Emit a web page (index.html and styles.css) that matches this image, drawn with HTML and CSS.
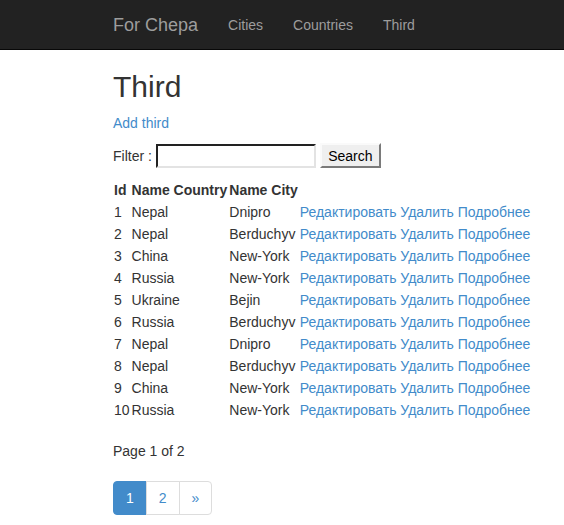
FILE: index.html
```html
<!DOCTYPE html>
<html>
<head>
<meta charset="utf-8">
<title>Third</title>
<link rel="stylesheet" href="styles.css">
</head>
<body>
<nav class="navbar">
  <div class="nav-inner">
    <a class="brand" href="#">For Chepa</a>
    <ul class="nav-links">
      <li><a href="#">Cities</a></li>
      <li><a href="#">Countries</a></li>
      <li><a href="#">Third</a></li>
    </ul>
  </div>
</nav>
<div class="container">
  <h2 class="title">Third</h2>
  <p class="add"><a href="#">Add third</a></p>
  <form class="filter">
    <span class="filter-label">Filter :</span>
    <input class="filter-input" type="text">
    <button class="filter-btn" type="button">Search</button>
  </form>
  <table class="grid">
    <thead>
      <tr><th>Id</th><th>Name Country</th><th>Name City</th><th></th></tr>
    </thead>
    <tbody>
      <tr><td>1</td><td>Nepal</td><td>Dnipro</td><td><a href="#">Редактировать</a> <a href="#">Удалить</a> <a href="#">Подробнее</a></td></tr>
      <tr><td>2</td><td>Nepal</td><td>Berduchyv</td><td><a href="#">Редактировать</a> <a href="#">Удалить</a> <a href="#">Подробнее</a></td></tr>
      <tr><td>3</td><td>China</td><td>New-York</td><td><a href="#">Редактировать</a> <a href="#">Удалить</a> <a href="#">Подробнее</a></td></tr>
      <tr><td>4</td><td>Russia</td><td>New-York</td><td><a href="#">Редактировать</a> <a href="#">Удалить</a> <a href="#">Подробнее</a></td></tr>
      <tr><td>5</td><td>Ukraine</td><td>Bejin</td><td><a href="#">Редактировать</a> <a href="#">Удалить</a> <a href="#">Подробнее</a></td></tr>
      <tr><td>6</td><td>Russia</td><td>Berduchyv</td><td><a href="#">Редактировать</a> <a href="#">Удалить</a> <a href="#">Подробнее</a></td></tr>
      <tr><td>7</td><td>Nepal</td><td>Dnipro</td><td><a href="#">Редактировать</a> <a href="#">Удалить</a> <a href="#">Подробнее</a></td></tr>
      <tr><td>8</td><td>Nepal</td><td>Berduchyv</td><td><a href="#">Редактировать</a> <a href="#">Удалить</a> <a href="#">Подробнее</a></td></tr>
      <tr><td>9</td><td>China</td><td>New-York</td><td><a href="#">Редактировать</a> <a href="#">Удалить</a> <a href="#">Подробнее</a></td></tr>
      <tr><td>10</td><td>Russia</td><td>New-York</td><td><a href="#">Редактировать</a> <a href="#">Удалить</a> <a href="#">Подробнее</a></td></tr>
    </tbody>
  </table>
  <p class="pageinfo">Page 1 of 2</p>
  <ul class="pagination">
    <li class="active"><span>1</span></li>
    <li><a href="#">2</a></li>
    <li><a href="#">»</a></li>
  </ul>
</div>
</body>
</html>
```

FILE: styles.css
```css
* { box-sizing: border-box; }
html, body { margin: 0; padding: 0; }
body {
  font-family: "Liberation Sans", Arial, sans-serif;
  font-size: 14px;
  line-height: 20px;
  color: #333;
  background: #fff;
}
a { color: #428bca; text-decoration: none; }

.navbar {
  background: #222;
  border-bottom: 1px solid #080808;
  height: 50px;
  margin-bottom: 20px;
}
.nav-inner {
  display: flex;
  padding-left: 98px;
}
.brand {
  display: block;
  padding: 15px;
  font-size: 18px;
  line-height: 20px;
  color: #9d9d9d;
}
.nav-links {
  display: flex;
  list-style: none;
  margin: 0;
  padding: 0;
}
.nav-links a {
  display: block;
  padding: 15px;
  line-height: 20px;
  color: #9d9d9d;
}

.container {
  padding: 0 15px;
  margin-left: 98px;
}
.title {
  font-size: 30px;
  font-weight: 500;
  line-height: 33px;
  margin: 20px 0 10px;
}
.add { margin: 0 0 10px; }

.filter {
  display: flex;
  align-items: center;
  margin: 0 0 11px;
  height: 25px;
}
.filter-label { margin-right: 4px; }
.filter-input {
  width: 160px;
  height: 24px;
  border: 2px inset #e3e3e3;
  border-top-color: #777;
  border-left-color: #777;
  border-right-color: #e3e3e3;
  border-bottom-color: #e3e3e3;
  padding: 1px 2px;
  font: inherit;
  margin: 0 4px 0 0;
  background: #fff;
}
.filter-btn {
  height: 25px;
  width: 61px;
  padding: 1px 6px;
  font: inherit;
  line-height: 18px;
  color: #000;
  background: #efefef;
  border: 2px solid #efefef;
  border-right-color: #7a7a7a;
  border-bottom-color: #7a7a7a;
  border-top-color: #fafafa;
  border-left-color: #fafafa;
  margin: 0;
}

.grid {
  border-collapse: collapse;
  border-spacing: 0;
}
.grid th, .grid td {
  padding: 1px;
  text-align: left;
  vertical-align: middle;
  white-space: nowrap;
}
.grid th { font-weight: bold; }

.pageinfo { margin: 20px 0 0; }

.pagination {
  display: flex;
  list-style: none;
  margin: 20px 0;
  padding: 0;
}
.pagination li a, .pagination li span {
  display: block;
  padding: 6px 12px;
  line-height: 20px;
  border: 1px solid #ddd;
  margin-left: -1px;
  color: #428bca;
  background: #fff;
}
.pagination li:first-child span, .pagination li:first-child a {
  margin-left: 0;
  border-radius: 4px 0 0 4px;
}
.pagination li:last-child a { border-radius: 0 4px 4px 0; }
.pagination li.active span {
  background: #428bca;
  border-color: #428bca;
  color: #fff;
}
```
